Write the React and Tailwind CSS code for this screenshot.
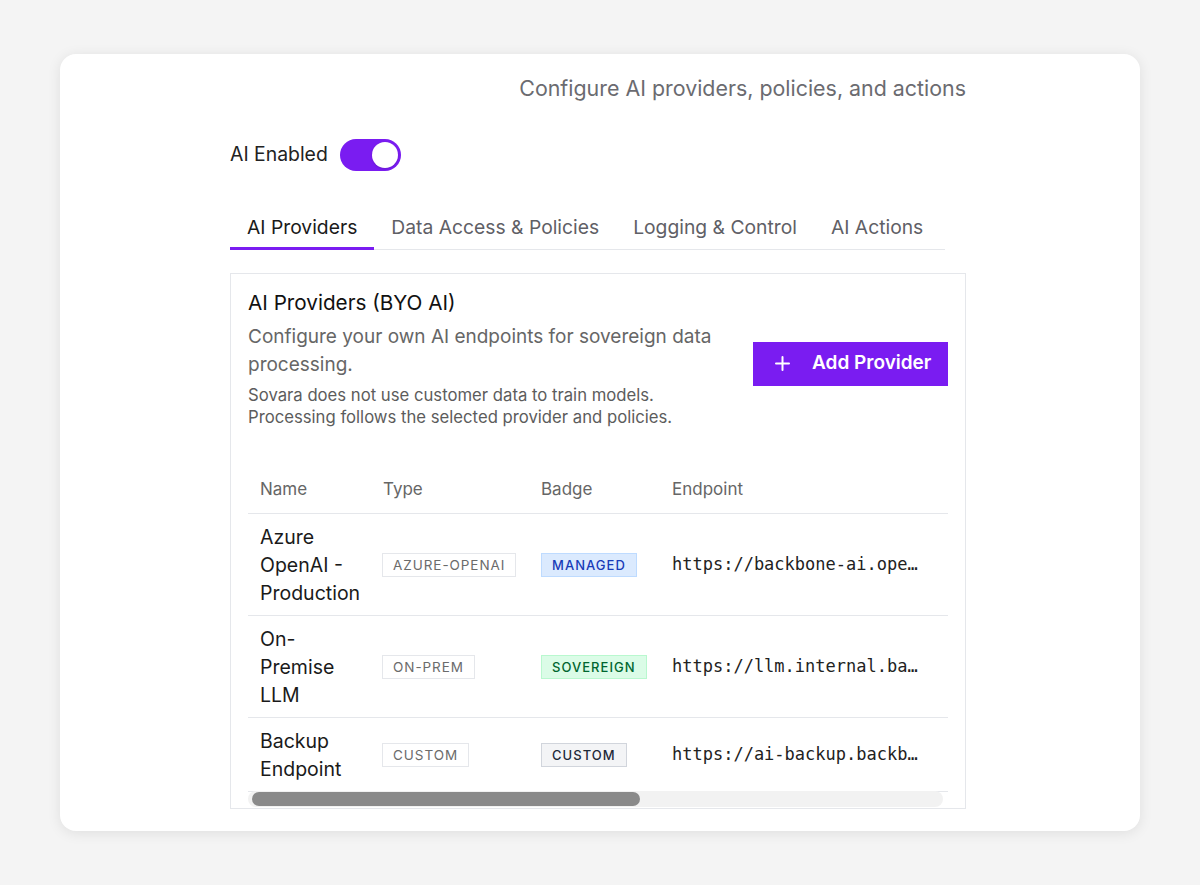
import React, { useState } from 'react'

const tabs = ["AI Providers", "Data Access & Policies", "Logging & Control", "AI Actions"];

const providers = [
    {
        name: "Azure OpenAI - Production",
        type: "azure-openai",
        badge: "managed",
        endpoint: "https://backbone-ai.openai.azure.com",
    },
    {
        name: "On-Premise LLM",
        type: "on-prem",
        badge: "sovereign",
        endpoint: "https://llm.internal.backbone.local",
    },
    {
        name: "Backup Endpoint",
        type: "custom",
        badge: "custom",
        endpoint: "https://ai-backup.backbone.local",
    },
];

const badgeStyles = {
    managed: "bg-blue-100 border-blue-200 text-blue-800",
    sovereign: "bg-green-100 border-green-200 text-green-800",
    custom: "bg-gray-100 border-gray-300 text-gray-800",
};

export default function App() {

    const [aiEnabled, setAiEnabled] = useState(true);
    const [activeTab, setActiveTab] = useState(0);

    return (
        <div className="min-h-screen bg-[#f4f4f4] px-[60px] pt-[54px] font-['Inter',sans-serif]">
            <div className="rounded-2xl bg-white shadow-[0_2px_14px_rgba(0,0,0,0.09)] pt-[20px] pb-[22px]">
                <div className="ml-[170px] w-[736px]">

                    {/* header */}
                    <p className="text-right text-[21.4px] leading-[28px] text-[#6b6b70]">
                        Configure AI providers, policies, and actions
                    </p>

                    {/* toggle */}
                    <div className="mt-[37px] flex items-center gap-3">
                        <span className="text-[19.4px] text-[#222]">AI Enabled</span>
                        <button
                            onClick={() => setAiEnabled(!aiEnabled)}
                            className={`flex h-[32px] w-[61px] items-center rounded-full px-[3px] ${aiEnabled ? "justify-end bg-[#7a1cf1]" : "justify-start bg-gray-300"}`}>
                            <span className="h-[26px] w-[26px] rounded-full bg-white shadow-sm" />
                        </button>
                    </div>

                    {/* tabs */}
                    <div className="mt-[42px] flex w-[715px] border-b border-gray-200">
                        {tabs.map((t, i) => (
                            <button
                                key={t}
                                onClick={() => setActiveTab(i)}
                                className={`-mb-px px-[17px] pb-[6px] text-[19.3px] leading-[28px] ${activeTab === i ? "border-b-[3px] border-[#7a1cf1] text-[#1a1a1a]" : "border-b-[3px] border-transparent text-[#5f6066]"}`}>
                                {t}
                            </button>
                        ))}
                    </div>

                    {/* panel */}
                    <div className="mt-[23px] border border-gray-200">
                        <div className="flex items-center justify-between px-[17px] pt-[15px]">
                            <div className="w-[480px]">
                                <h2 className="text-[20.7px] leading-[28px] text-[#111]">AI Providers (BYO AI)</h2>
                                <p className="mt-[6px] text-[19px] leading-[28px] text-[#666]">
                                    Configure your own AI endpoints for sovereign data processing.
                                </p>
                                <p className="mt-[5px] text-[16.7px] leading-[22px] text-[#5c5c5c]">
                                    Sovara does not use customer data to train models.<br />
                                    Processing follows the selected provider and policies.
                                </p>
                            </div>
                            <button className="mt-[10px] flex h-[44px] w-[195px] items-center gap-[22px] bg-[#7a1cf1] pl-[22px] text-[19px] font-semibold text-white">
                                <svg width="15" height="15" viewBox="0 0 15 15" fill="none" stroke="currentColor" strokeWidth="2" strokeLinecap="round">
                                    <path d="M7.5 1v13M1 7.5h13" />
                                </svg>
                                Add Provider
                            </button>
                        </div>

                        {/* table */}
                        <div className="mx-[17px] mt-[37px]">
                            <div className="overflow-hidden">
                                <table className="w-full table-fixed text-left">
                                    <colgroup>
                                        <col className="w-[123px]" />
                                        <col className="w-[158px]" />
                                        <col className="w-[131px]" />
                                        <col />
                                    </colgroup>
                                    <thead>
                                        <tr className="border-b border-gray-200">
                                            {["Name", "Type", "Badge", "Endpoint"].map((h) => (
                                                <th key={h} className="px-3 py-3 text-[17px] font-normal leading-[24px] text-[#666]">{h}</th>
                                            ))}
                                        </tr>
                                    </thead>
                                    <tbody>
                                        {providers.map((p) => (
                                            <tr key={p.name} className="border-b border-gray-200">
                                                <td className="px-3 pt-[9px] pb-[8px] text-[19.5px] leading-[28px] text-[#1a1a1a]">{p.name}</td>
                                                <td className="px-[11px] align-middle">
                                                    <span className="inline-flex h-[24px] items-center border border-gray-200 bg-white px-[10px] text-[13.5px] uppercase tracking-[0.07em] text-[#6b6b6b]">
                                                        {p.type}
                                                    </span>
                                                </td>
                                                <td className="px-[12px] align-middle">
                                                    <span className={`inline-flex h-[24px] items-center border px-[10px] text-[13px] font-medium uppercase tracking-[0.08em] ${badgeStyles[p.badge]}`}>
                                                        {p.badge}
                                                    </span>
                                                </td>
                                                <td className="px-3 align-middle">
                                                    <div className="w-[250px] truncate font-['DejaVu_Sans_Mono',monospace] text-[17px] text-[#222]">
                                                        {p.endpoint}
                                                    </div>
                                                </td>
                                            </tr>
                                        ))}
                                    </tbody>
                                </table>
                            </div>
                            {/* scrollbar */}
                            <div className="-mt-px mb-[1px] h-[16px] w-[695px] rounded-full bg-[#f2f2f2] p-[1px] pl-[4px]">
                                <div className="h-[14px] w-[388px] rounded-full bg-[#8a8a8a]" />
                            </div>
                        </div>
                    </div>

                </div>
            </div>
        </div>
    )
}
